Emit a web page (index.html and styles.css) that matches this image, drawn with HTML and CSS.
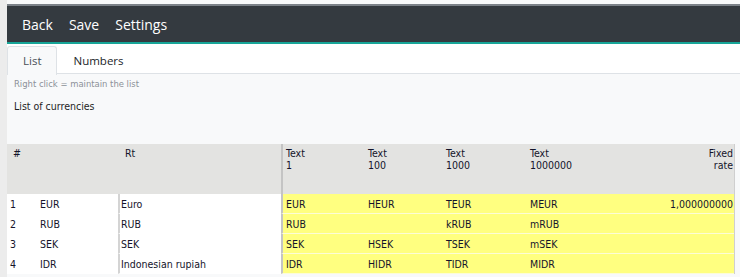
FILE: index.html
```html
<!DOCTYPE html>
<html>
<head>
	<meta charset="UTF-8">
	<title>Currencies</title>
	<link rel="stylesheet" href="styles.css">
</head>
<body>
	<div class="app">
		<div class="rail"></div>
		<div class="main">
			<nav class="topbar">
				<a href="#">Back</a>
				<a href="#">Save</a>
				<a href="#">Settings</a>
			</nav>
			<ul class="tabs">
				<li class="tab active">List</li>
				<li class="tab">Numbers</li>
			</ul>
			<div class="content">
				<p class="hint">Right click = maintain the list</p>
				<h2 class="title">List of currencies</h2>
				<table class="grid">
					<colgroup>
						<col class="c-nr">
						<col class="c-code">
						<col class="c-name">
						<col class="c-t1">
						<col class="c-t100">
						<col class="c-t1000">
						<col class="c-tmil">
						<col class="c-rate">
					</colgroup>
					<thead>
						<tr>
							<th class="h-nr">#</th>
							<th></th>
							<th class="h-name">Rt</th>
							<th class="sep">Text<br>1</th>
							<th>Text<br>100</th>
							<th>Text<br>1000</th>
							<th>Text<br>1000000</th>
							<th class="num">Fixed<br>rate</th>
						</tr>
					</thead>
					<tbody>
						<tr>
							<td>1</td><td>EUR</td><td class="name">Euro</td>
							<td class="sep">EUR</td><td>HEUR</td><td>TEUR</td><td>MEUR</td><td class="num">1,000000000</td>
						</tr>
						<tr>
							<td>2</td><td>RUB</td><td class="name">RUB</td>
							<td class="sep">RUB</td><td></td><td>kRUB</td><td>mRUB</td><td class="num"></td>
						</tr>
						<tr>
							<td>3</td><td>SEK</td><td class="name">SEK</td>
							<td class="sep">SEK</td><td>HSEK</td><td>TSEK</td><td>mSEK</td><td class="num"></td>
						</tr>
						<tr>
							<td>4</td><td>IDR</td><td class="name">Indonesian rupiah</td>
							<td class="sep">IDR</td><td>HIDR</td><td>TIDR</td><td>MIDR</td><td class="num"></td>
						</tr>
					</tbody>
				</table>
			</div>
		</div>
	</div>
</body>
</html>
```

FILE: styles.css
```css
body {
	margin: 0;
	padding: 0;
	font-family: "DejaVu Sans Condensed", "DejaVu Sans", sans-serif;
	background-color: #f8f9fa;
	color: #14142a;
}

.app {
	display: flex;
	min-height: 277px;
}

.rail {
	width: 7px;
	flex: none;
	background-color: #ececec;
}

.main {
	flex: 1;
	min-width: 0;
	background-color: #f8f9fa;
}

/* Barra superior */
.topbar {
	display: flex;
	align-items: center;
	gap: 16px;
	height: 36px;
	margin-top: 4px;
	padding-left: 15px;
	background-color: #343a40;
	border-top: 2px solid #7b8188;
	border-bottom: 2px solid #17a598;
	font-family: "Open Sans", sans-serif;
	font-size: 14px;
}

.topbar a {
	color: #fff;
	text-decoration: none;
}

/* Pestañas */
.tabs {
	display: flex;
	margin: 0;
	padding: 2px 0 0;
	list-style: none;
	height: 27px;
	background-color: #fff;
	border-bottom: 1px solid #dee2e6;
	font-family: "Open Sans", sans-serif;
	font-size: 11.5px;
}

.tab {
	padding: 0 16px;
	line-height: 27px;
	border: 1px solid transparent;
	border-bottom: none;
	color: #212529;
}

.tab.active {
	padding: 0 14px 0 15px;
	background-color: #f8f9fa;
	border-color: #dee2e6;
	border-radius: 3px 3px 0 0;
	height: 28px;
	color: #495057;
}

/* Contenido */
.content {
	padding: 3px 0 0 7px;
}

.hint {
	margin: 0;
	font-size: 9.4px;
	line-height: 13px;
	color: #8c9198;
}

.title {
	margin: 10px 0 0;
	font-size: 10.5px;
	font-weight: normal;
	line-height: 13px;
	color: #1e1e1e;
}

/* Tabla */
.grid {
	margin: 31px 0 0 -7px;
	width: 727px;
	border-collapse: separate;
	border-spacing: 0;
	table-layout: fixed;
	font-size: 10.5px;
	border-right: 1px solid #cfcfcf;
}

.c-nr { width: 30px; }
.c-code { width: 81px; }
.c-name { width: 163px; }
.c-t1 { width: 84px; }
.c-t100 { width: 78px; }
.c-t1000 { width: 84px; }
.c-tmil { width: 113px; }
.c-rate { width: 94px; }

th {
	height: 50px;
	padding: 3px 0 0 3px;
	vertical-align: top;
	text-align: left;
	font-weight: normal;
	line-height: 12px;
	background-color: #e3e3e1;
	box-sizing: border-box;
}

th.h-nr {
	padding-left: 6px;
}

th.h-name {
	padding-left: 7px;
}

td {
	height: 20px;
	padding: 0 0 0 3px;
	box-sizing: border-box;
	background-color: #fff;
	border-bottom: 1px solid #fff;
	white-space: nowrap;
}

td.name {
	border-left: 2px solid #d4d4d4;
	padding-left: 1px;
}

.sep {
	border-left: 2px solid #c4c4c4;
	padding-left: 3px;
}

td.sep,
td.sep ~ td {
	background-color: #ffff80;
	border-bottom-color: #fcfcd8;
}

.num {
	text-align: right;
	padding-right: 1px;
}
```
